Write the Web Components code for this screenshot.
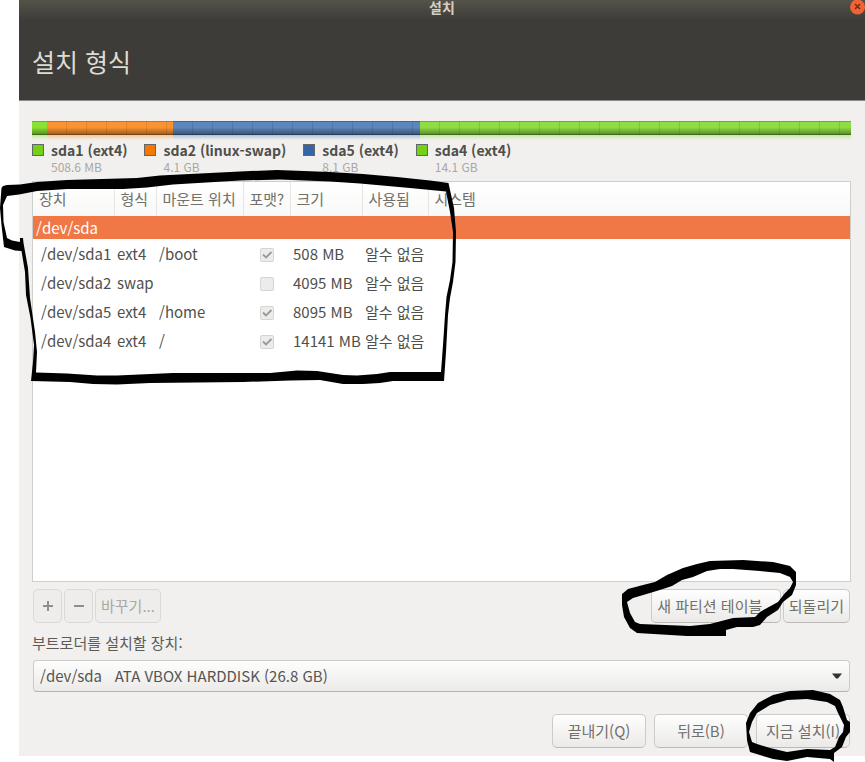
<!DOCTYPE html>
<html lang="ko">
<head>
<meta charset="utf-8">
<title>설치</title>
<style>
html,body{margin:0;min-height:100%;background:#fff}
body{font-family:"Noto Sans CJK KR","Noto Sans",sans-serif;font-size:15px;line-height:22px;color:#4f4f4c}
</style>
</head>
<body>
<install-window heading="설치 형식" caption="설치">
  <disk-bar></disk-bar>
  <disk-legend>
    <legend-item color="#73d216" size="508.6 MB">sda1 (ext4)</legend-item>
    <legend-item color="#f57900" size="4.1 GB">sda2 (linux-swap)</legend-item>
    <legend-item color="#3465a4" size="8.1 GB">sda5 (ext4)</legend-item>
    <legend-item color="#73d216" size="14.1 GB">sda4 (ext4)</legend-item>
  </disk-legend>
  <partition-table></partition-table>
  <table-actions>
    <push-button disabled square label="추가"><svg width="12" height="12" viewBox="0 0 12 12"><path d="M1 6h10M6 1v10" stroke="#8f8e8b" stroke-width="2"/></svg></push-button>
    <push-button disabled square label="삭제"><svg width="12" height="12" viewBox="0 0 12 12"><path d="M1 6h10" stroke="#8f8e8b" stroke-width="2"/></svg></push-button>
    <push-button disabled>바꾸기...</push-button>
    <push-button slot="end">새 파티션 테이블...</push-button>
    <push-button slot="end">되돌리기</push-button>
  </table-actions>
  <boot-device></boot-device>
  <dialog-actions>
    <push-button wide>끝내기(Q)</push-button>
    <push-button wide>뒤로(B)</push-button>
    <push-button wide>지금 설치(I)</push-button>
  </dialog-actions>
</install-window>
<ink-notes></ink-notes>
<script>
const define = (name, html, setup) => customElements.define(name, class extends HTMLElement {
  constructor() {
    super();
    const t = document.createElement('template');
    t.innerHTML = html;
    this.attachShadow({mode: 'open'}).append(t.content.cloneNode(true));
  }
  connectedCallback() { if (setup) setup(this, this.shadowRoot); }
});

define('install-window', `
<style>
:host{display:block;margin-left:19px;background:#f1f0ee}
header{background:linear-gradient(#55524a,#3d3c38 20px);color:#dfdbd2;height:100px;border-bottom:1px solid #8b8984;display:flex;flex-direction:column}
.bar{display:grid;grid-template-columns:20px 1fr 20px;height:20px;align-items:start}
.cap{text-align:center;font-size:14px;font-weight:700;line-height:14px;color:#d4d0c6}
button{grid-column:3;border:0;padding:0;background:none;width:16px;height:16px;justify-self:end}
svg{display:block}
h1{margin:24px 13px 0;font-size:25px;line-height:34px;font-weight:400}
main{display:flex;flex-direction:column;padding:20px 14px 8px 13px}
</style>
<header><div class="bar"><span></span><div class="cap"></div>
<button aria-label="닫기"><svg width="16" height="16" viewBox="0 0 16 16"><circle cx="8.500" cy="7" r="7.500" fill="#ef6335"/><path d="M6 4l5 5m0-5l-5 5" stroke="#7c2a10" stroke-width="1.6"/></svg></button></div>
<h1></h1></header><main><slot></slot></main>`,
(h, r) => { r.querySelector('.cap').textContent = h.getAttribute('caption'); r.querySelector('h1').textContent = h.getAttribute('heading'); });

define('disk-bar', `
<style>
:host{display:flex;height:19px}
i{display:block;height:14px;box-shadow:inset 0 1px rgba(0,0,0,.22),inset 0 -1px rgba(0,0,0,.25);background:
 repeating-linear-gradient(90deg,transparent 0 19px,rgba(0,0,0,.1) 19px 20px),
 linear-gradient(transparent 45%,rgba(0,0,0,.4)),var(--c)}
div::after{content:"";display:block;height:5px;background:linear-gradient(var(--c),transparent);opacity:.45}
</style>
<div style="flex:15;--c:#8ae234"><i></i></div><div style="flex:126;--c:#fb9430"><i></i></div><div style="flex:247;--c:#5d86bc"><i></i></div><div style="flex:431;--c:#8fdd43"><i></i></div>`);

define('disk-legend', `<style>:host{display:flex;gap:17px;height:41px}</style><slot></slot>`);

define('legend-item', `
<style>
:host{display:grid;grid-template-columns:12px auto;column-gap:7px;align-content:start}
i{width:10px;height:10px;border:1px solid #666;margin-top:4px}
b{font-size:14px;line-height:21px}
small{grid-column:2;font-size:12px;line-height:12px;color:#aaa8a4}
</style><i></i><b><slot></slot></b><small></small>`,
(h, r) => { r.querySelector('i').style.background = h.getAttribute('color'); r.querySelector('small').textContent = h.getAttribute('size'); });

define('partition-table', `
<style>
:host{display:block;background:#fff;border:1px solid #d0cecb;min-height:399px}
table{border-collapse:collapse;table-layout:fixed;width:100%}
th,td{padding:0 0 0 3px;text-align:left;font-weight:400;white-space:nowrap;height:29px}
th{height:34px;padding-left:6px;background:linear-gradient(#fff,#f8f8f7);border-right:1px solid #e6e5e3;color:#70706c;box-sizing:border-box}
th:last-child{border-right:0}
tr.sel td{background:#f07746;color:#fff;height:23px;line-height:22px}
td:first-child{padding-left:8px}
tr.sel td:first-child{padding-left:3px}
td.c{text-align:center;padding:0}
input{appearance:none;width:14px;height:14px;margin:0;border:1px solid #d5d5d3;border-radius:2px;background:#ececeb;vertical-align:middle}
input:checked{background:#ececeb url("data:image/svg+xml,%3Csvg xmlns='http://www.w3.org/2000/svg' viewBox='0 0 12 12'%3E%3Cpath d='M2 5.5l3 3L10.5 3' fill='none' stroke='%23999' stroke-width='1.8'/%3E%3C/svg%3E")}
</style>
<table><colgroup><col style="width:81px"><col style="width:42px"><col style="width:87px"><col style="width:47px"><col style="width:72px"><col style="width:66px"><col></colgroup>
<thead><tr><th>장치</th><th>형식</th><th>마운트 위치</th><th>포맷?</th><th>크기</th><th>사용됨</th><th>시스템</th></tr></thead>
<tbody><tr class="sel"><td colspan="7">/dev/sda</td></tr></tbody></table>`,
(h, r) => {
  const body = r.querySelector('tbody');
  for (const [d, f, m, on, s] of [['/dev/sda1','ext4','/boot',1,'508 MB'],['/dev/sda2','swap','',0,'4095 MB'],['/dev/sda5','ext4','/home',1,'8095 MB'],['/dev/sda4','ext4','/',1,'14141 MB']])
    body.insertAdjacentHTML('beforeend', `<tr><td>${d}</td><td>${f}</td><td>${m}</td><td class="c"><input type="checkbox" aria-label="${d} 포맷" disabled ${on ? 'checked' : ''}></td><td>${s}</td><td>알수 없음</td><td></td></tr>`);
});

define('push-button', `
<style>
:host{display:block}
button{font:inherit;color:#70706c;height:34px;padding:0 5px;border:1px solid #cdcbc8;border-bottom-color:#bbb9b5;border-radius:5px;background:linear-gradient(#fefefe,#ebeae8);white-space:nowrap}
button:disabled{color:#aaa8a4;background:#eeedec;border-color:#dad9d7}
:host([square]) button{display:grid;place-items:center;width:29px;padding:0}
:host([wide]) button{width:94px;padding:0}
</style><button><slot></slot></button>`,
(h, r) => {
  const b = r.querySelector('button');
  b.disabled = h.hasAttribute('disabled');
  if (h.hasAttribute('label')) b.setAttribute('aria-label', h.getAttribute('label'));
});

define('table-actions', `
<style>:host{display:flex;justify-content:space-between;padding:7px 1px 0}div{display:flex;gap:2px}</style>
<div><slot></slot></div><div><slot name="end"></slot></div>`);

define('boot-device', `
<style>
:host{display:flex;flex-direction:column;gap:6px;padding-top:9px}
label{color:#5c5c58}
span{display:grid;align-items:center;padding:0 1px}
select{grid-area:1/1;appearance:none;font:inherit;color:#555552;height:32px;width:100%;padding:0 6px;border:1px solid #cdcbc8;border-bottom-color:#b5b3af;border-radius:4px;background:linear-gradient(#fefefe,#ebeae8)}
svg{grid-area:1/1;justify-self:end;margin-right:8px;pointer-events:none}
</style>
<label for="dev">부트로더를 설치할 장치:</label>
<span><select id="dev"><option>/dev/sda&nbsp;&nbsp; ATA VBOX HARDDISK (26.8 GB)</option></select>
<svg width="10" height="6" viewBox="0 0 10 6"><path d="M0 .5h10L6 5.5H4z" fill="#333"/></svg></span>`);

define('dialog-actions', `<style>:host{display:flex;justify-content:flex-end;gap:8px;padding:22px 1px 0}</style><slot></slot>`);

/* Hand-drawn marker rings laid over the window */
define('ink-notes', `
<style>:host{position:absolute;left:0;top:0;pointer-events:none}svg{display:block}</style>
<svg width="865" height="762" viewBox="0 0 865 762" fill="#000" fill-rule="evenodd" aria-hidden="true">
<path d="M1.500 188L3 186 7 185 20 184.500 37 182 67 180 137 178 160 175.500 240 171.500 277 170 330 172 363 174 397 177 430 180.500 448.500 183 450 190 454 208 456 232 455.500 262 453 282 450 298 448 315 446 352 444 381 393 381 380 383 363 384 343 384 320 380 290 380.500 243 382 150 383 117 384.500 93 384 70 382 31 381 33 362 34 345 30.500 318 26 295 25 272 21.500 251 15 250.500 4 247 1.500 225 0 208Z
M7 196L19 194.500 37 191 67 189 123 189 147 187.500 173 184.500 240 180.500 280 179.500 330 181.500 360 183.500 410 188 446 191.500 450 212 453 232 452.500 262 450 280 446.500 297 445 315 443 345 441 372 390 372 377 374 357 375.500 343 375 317 371 297 370.500 270 373 173 373 117 375.500 97 375.500 67 373.500 36 372.500 37 352 35 332 30 298 28 268 23.500 243 23 238 20 238 20 242 12 240.500 7 238 3.500 222 3 205Z"/>
<path d="M622 594L628 589 643 585 655 582 667 575 683 568 697 564 710 561 743 560 773 562 790 566 796 572 796 585 792 595 783 602 778 610 767 617 760 625 753 627 737 627 726 630 726 636 687 636 637 633 630 628 624 617 622 605Z
M627 602L633 598 650 593 663 589 672 586 682 580 693 577 707 571 720 569 733 569 760 571 780 573 790 577 793 582 790 588 785 593 778 602 767 608 760 612 755 617 733 618 710 624 690 626 640 624 635 622 630 613Z"/>
<path d="M750 713L758 703 773 695 790 691 813 690 830 694 840 700 843 707 847 720 850 722 850 732 846 737 842 747 834 753 834 762 830 759 807 757 787 761 773 759 750 752 747 740 746 723Z
M749 732L752 722 757 713 770 705 787 700 807 699 827 702 835 706 838 713 844 725 843 732 839 737 835 747 830 750 807 749 787 752 770 748 757 744 752 742Z"/>
</svg>`);
</script>
</body>
</html>
